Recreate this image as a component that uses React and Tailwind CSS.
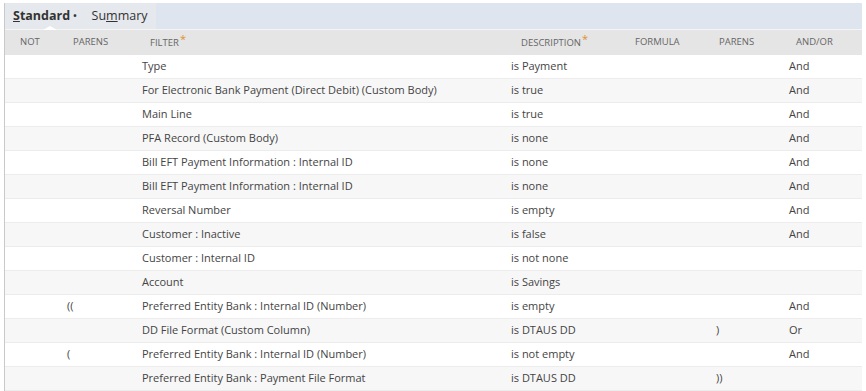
import React from 'react';

const rows = [
  { filter: 'Type', desc: 'is Payment', andor: 'And' },
  { filter: 'For Electronic Bank Payment (Direct Debit) (Custom Body)', desc: 'is true', andor: 'And' },
  { filter: 'Main Line', desc: 'is true', andor: 'And' },
  { filter: 'PFA Record (Custom Body)', desc: 'is none', andor: 'And' },
  { filter: 'Bill EFT Payment Information : Internal ID', desc: 'is none', andor: 'And' },
  { filter: 'Bill EFT Payment Information : Internal ID', desc: 'is none', andor: 'And' },
  { filter: 'Reversal Number', desc: 'is empty', andor: 'And' },
  { filter: 'Customer : Inactive', desc: 'is false', andor: 'And' },
  { filter: 'Customer : Internal ID', desc: 'is not none' },
  { filter: 'Account', desc: 'is Savings' },
  { open: '((', filter: 'Preferred Entity Bank : Internal ID (Number)', desc: 'is empty', andor: 'And' },
  { filter: 'DD File Format (Custom Column)', desc: 'is DTAUS DD', close: ')', andor: 'Or' },
  { open: '(', filter: 'Preferred Entity Bank : Internal ID (Number)', desc: 'is not empty', andor: 'And' },
  { filter: 'Preferred Entity Bank : Payment File Format', desc: 'is DTAUS DD', close: '))' },
];

const cols = 'grid grid-cols-[55px_75px_368px_117px_88px_74px_80px]';

const Star = () => <span className="text-[#e0912f] text-[11px] relative -top-[3px] ml-[1px]">*</span>;

const App = () => {
  return (
    <div className="w-[866px] h-[391px] bg-white pt-[3px] overflow-hidden" style={{ fontFamily: '"Open Sans", sans-serif' }}>
      <div className="ml-[4px] w-[858px] border-l border-[#c9c9c9]">
        {/* tabs */}
        <div className="flex h-[26px] bg-[#dfe5ee]">
          <div className="relative flex items-center w-[151px] bg-[#e5e8ed] text-[12.5px] text-[#333]">
            <span className="ml-[8px] font-bold"><span className="underline">S</span>tandard</span>
            <span className="ml-[3px] text-[9px] font-bold">•</span>
            <span className="ml-[15px]">Su<span className="underline">m</span>mary</span>
            <span className="absolute left-[38px] -bottom-[1px] w-0 h-0 border-l-[7px] border-r-[7px] border-b-[4px] border-l-transparent border-r-transparent border-b-white" />
          </div>
        </div>
        {/* header */}
        <div className={`${cols} h-[26px] items-center bg-[#e5e5e5] border-t border-[#f4f4f4] text-[9.5px] text-[#666] uppercase`}>
          <div className="pl-[15px]">Not</div>
          <div className="pl-[13px]">Parens</div>
          <div className="pl-[15px]">Filter<Star /></div>
          <div className="pl-[18px]">Description<Star /></div>
          <div className="pl-[15px]">Formula</div>
          <div className="pl-[11px]">Parens</div>
          <div className="pl-[14px]">And/Or</div>
        </div>
        {/* rows */}
        {rows.map((r, i) => (
          <div
            key={i}
            className={`${cols} h-[24px] items-center border-b border-[#ececec] text-[11px] text-[#444] ${i % 2 === 1 ? 'bg-[#f7f7f7]' : 'bg-white'}`}
          >
            <div />
            <div className="pl-[7px]">{r.open || ''}</div>
            <div className="pl-[7px] whitespace-nowrap">{r.filter}</div>
            <div className="pl-[8px]">{r.desc}</div>
            <div />
            <div className="pl-[8px]">{r.close || ''}</div>
            <div className="pl-[7px]">{r.andor || ''}</div>
          </div>
        ))}
      </div>
    </div>
  );
};

export default App;
